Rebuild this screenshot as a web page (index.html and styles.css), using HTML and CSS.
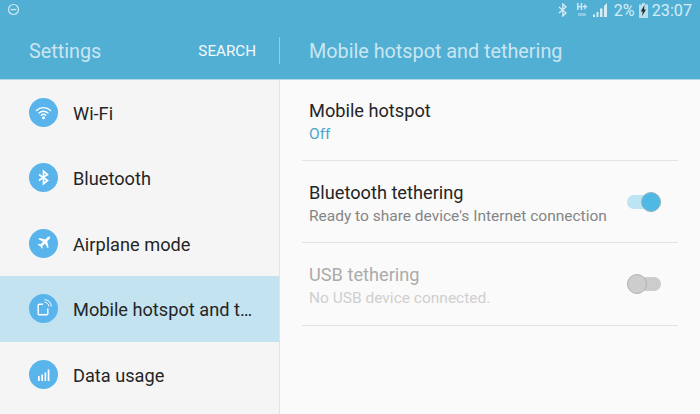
FILE: index.html
```html
<!DOCTYPE html>
<html lang="en">
<head>
    <meta charset="UTF-8">
    <title>Mobile hotspot and tethering</title>
    <link rel="stylesheet" href="styles.css">
</head>
<body>
    <div class="status-bar">
        <svg class="dnd-icon" width="13" height="13" viewBox="0 0 13 13"><circle cx="6.500" cy="6.500" r="5" fill="none" stroke="#cfe9f3" stroke-width="1.200"/><rect x="3.600" y="5.900" width="5.800" height="1.300" fill="#cfe9f3"/></svg>
        <div class="status-right">
            <svg width="10" height="14" viewBox="0 0 10 14"><path d="M1 4l7 6-3.200 3V1L8 4 1 10" fill="none" stroke="#d5edf6" stroke-width="1.300"/></svg>
            <div class="network"><span>H+</span><i></i></div>
            <svg class="signal" width="15" height="14" viewBox="0 0 15 14"><path d="M0 14h2v-2.500H0zM3.500 14h2V9h-2zM7 14h2.500V5.500H7zM11 14h3V0l-3 3z" fill="#d5edf6"/></svg>
            <span class="battery-text">2%</span>
            <svg width="9" height="15" viewBox="0 0 9 15"><path d="M3 0h3v1.500h3V15H0V1.500h3z" fill="#b9deec"/><path d="M5.500 2L1.800 8.500h2L3 13l4-6.500H5z" fill="#1f2a30"/></svg>
            <span class="clock">23:07</span>
        </div>
    </div>

    <header class="app-bar">
        <div class="app-bar-left">
            <span class="app-title">Settings</span>
            <span class="search-btn">SEARCH</span>
        </div>
        <div class="page-title">Mobile hotspot and tethering</div>
    </header>

    <main class="content">
        <nav class="sidebar">
            <div class="nav-item">
                <span class="nav-icon">
                    <svg width="19" height="19" viewBox="0 0 19 19" fill="none" stroke="#fff" stroke-width="1.400" stroke-linecap="round"><path d="M2.500 7.500a10 10 0 0 1 14 0"/><path d="M5 10a6.500 6.500 0 0 1 9 0"/><path d="M7.300 12.300a3.200 3.200 0 0 1 4.400 0"/><circle cx="9.500" cy="14.800" r=".8" fill="#fff"/></svg>
                </span>
                <span class="nav-label">Wi-Fi</span>
            </div>
            <div class="nav-item">
                <span class="nav-icon">
                    <svg width="17" height="17" viewBox="0 0 17 17"><path d="M4 5.500l8.500 6-4 3.300V2.200l4 3.300-8.500 6" fill="none" stroke="#fff" stroke-width="1.700"/></svg>
                </span>
                <span class="nav-label">Bluetooth</span>
            </div>
            <div class="nav-item">
                <span class="nav-icon">
                    <svg width="16" height="16" viewBox="0 0 19 19"><path d="M16.800 2.200c-.8-.8-2.200-.6-3 .2L11 5.200 4 3.500 2.800 4.700l5.700 3.200-3 3-2.300-.4-1 1 3 1.800 1.800 3 1-1-.4-2.300 3-3 3.200 5.700 1.200-1.200-1.700-7 2.800-2.800c.8-.8 1-1.700.2-2.500z" fill="#fff"/></svg>
                </span>
                <span class="nav-label">Airplane mode</span>
            </div>
            <div class="nav-item active">
                <span class="nav-icon">
                    <svg width="19" height="19" viewBox="0 0 19 19" fill="none" stroke="#fff"><path d="M9 5.200H5.200a1 1 0 0 0-1 1v8.600a1 1 0 0 0 1 1h7.600a1 1 0 0 0 1-1V9.500" stroke-width="1.400"/><path d="M10.500 3.200a4.300 4.300 0 0 1 4.300 4.300M10.500 .7a6.800 6.800 0 0 1 6.800 6.800" stroke-width="1"/></svg>
                </span>
                <span class="nav-label">Mobile hotspot and t…</span>
            </div>
            <div class="nav-item">
                <span class="nav-icon">
                    <svg width="17" height="17" viewBox="0 0 17 17"><path d="M3 10h1.700v5H3zM6.300 8.500H8V15H6.300zM9.500 6.500h1.700V15H9.500zM12.700 3.500h1.700V15h-1.700z" fill="#fff"/></svg>
                </span>
                <span class="nav-label">Data usage</span>
            </div>
        </nav>

        <section class="detail">
            <div class="row">
                <div class="row-text">
                    <div class="row-title">Mobile hotspot</div>
                    <div class="row-sub status-off">Off</div>
                </div>
            </div>
            <div class="row">
                <div class="row-text">
                    <div class="row-title">Bluetooth tethering</div>
                    <div class="row-sub">Ready to share device's Internet connection</div>
                </div>
                <span class="switch on"><span class="knob"></span></span>
            </div>
            <div class="row disabled">
                <div class="row-text">
                    <div class="row-title">USB tethering</div>
                    <div class="row-sub">No USB device connected.</div>
                </div>
                <span class="switch"><span class="knob"></span></span>
            </div>
        </section>
    </main>
</body>
</html>
```

FILE: styles.css
```css
* {
    box-sizing: border-box;
}

body {
    margin: 0;
    width: 700px;
    height: 414px;
    overflow: hidden;
    font-family: Roboto, sans-serif;
    background-color: #fafafa;
    color: #252525;
}

.status-bar {
    height: 24px;
    padding: 0 7px;
    display: flex;
    justify-content: space-between;
    align-items: flex-start;
    background-color: #52afd4;
    color: #d5edf6;
}

.dnd-icon {
    margin-top: 3px;
}

.status-right {
    display: flex;
    align-items: center;
    height: 20px;
    margin-right: 1px;
}

.network {
    width: 12px;
    margin-left: 8px;
    display: flex;
    flex-direction: column;
    align-items: center;
}

.network span {
    font-size: 8.5px;
    line-height: 7px;
    font-weight: 700;
}

.network i {
    width: 8px;
    height: 3px;
    margin-top: 2px;
    background-color: #8ccae2;
}

.signal {
    margin-left: 5px;
}

.battery-text {
    margin-left: 6px;
    margin-right: 4px;
    font-size: 16.2px;
}

.clock {
    margin-left: 4px;
    font-size: 16.2px;
}

.app-bar {
    height: 56px;
    display: flex;
    background-color: #52afd4;
    border-bottom: 1px solid #b5d7e6;
}

.app-bar-left {
    width: 280px;
    height: 27px;
    margin-top: 13px;
    padding: 0 23px 0 29px;
    display: flex;
    justify-content: space-between;
    align-items: center;
    border-right: 1px solid #97cde3;
}

.app-title {
    font-size: 19.8px;
    padding-top: 2px;
    color: rgba(255, 255, 255, 0.7);
}

.search-btn {
    font-size: 15.2px;
    color: #f2fafd;
}

.page-title {
    padding-left: 29px;
    margin-top: 14px;
    line-height: 27px;
    font-size: 19.8px;
    color: rgba(255, 255, 255, 0.7);
}

.content {
    display: flex;
    height: 334px;
}

.sidebar {
    width: 280px;
    flex-shrink: 0;
    background-color: #f5f5f5;
    border-right: 1px solid #e2e2e2;
}

.nav-item {
    height: 65.67px;
    padding-left: 29px;
    display: flex;
    align-items: center;
    gap: 15px;
}

.nav-item:first-child {
    height: 64.6px;
}

.nav-item.active {
    background-color: #c3e3f1;
}

.nav-icon {
    width: 29px;
    height: 29px;
    flex-shrink: 0;
    border-radius: 50%;
    background-color: #5ab4ec;
    display: flex;
    justify-content: center;
    align-items: center;
}

.nav-label {
    padding-top: 2px;
    font-size: 18.2px;
    white-space: nowrap;
}

.detail {
    flex: 1;
    padding: 0 22px;
}

.row {
    height: 82px;
    padding: 0 17px 0 7px;
    display: flex;
    justify-content: space-between;
    align-items: center;
    border-bottom: 1px solid #e3e3e3;
}

.row:first-child {
    height: 81px;
}

.row:last-child {
    height: 83px;
}

.row-text {
    padding-top: 4px;
}

.row-title {
    font-size: 18.2px;
    line-height: 22px;
}

.row-sub {
    margin-top: 2px;
    font-size: 15.5px;
    line-height: 20px;
    color: #858585;
}

.status-off {
    color: #4da6cb;
}

.disabled .row-title {
    color: #ababab;
}

.disabled .row-sub {
    color: #cfcfcf;
}

.switch {
    position: relative;
    width: 34px;
    height: 14px;
    border-radius: 7px;
    background-color: #cccccc;
}

.switch.on {
    background-color: #bce4f3;
}

.knob {
    position: absolute;
    left: 0;
    top: -3px;
    width: 20px;
    height: 20px;
    border-radius: 50%;
    background-color: #cdcdcd;
    border: 1px solid #b3b3b3;
}

.switch.on .knob {
    left: auto;
    right: 0;
    background-color: #4fb9e3;
    border-color: #8fb3c2;
}
```
